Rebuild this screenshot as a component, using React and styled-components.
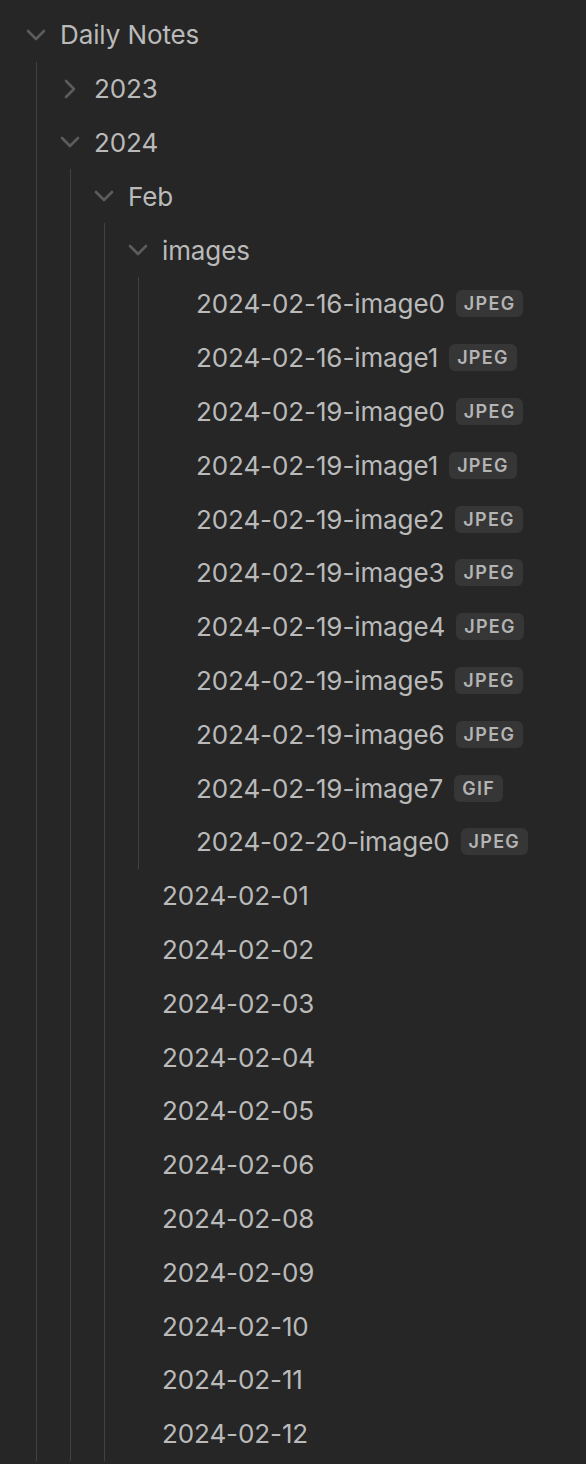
import React from 'react';
import styled, { createGlobalStyle } from 'styled-components';

const GlobalStyle = createGlobalStyle`
	html, body {
		margin: 0;
		padding: 0;
		background: #262626;
	}
	body {
		font-family: Inter, "Noto Sans", "Liberation Sans", sans-serif;
		-webkit-font-smoothing: antialiased;
	}
`;

const Explorer = styled.div`
	width: 586px;
	height: 1464px;
	padding: 8px 0 0 3px;
	box-sizing: border-box;
	background: #262626;
	overflow: hidden;
`;

const Row = styled.div`
	display: flex;
	align-items: center;
	height: 53.8px;
	padding-left: ${(p) => (p.$file ? '57px' : '21px')};
	color: #bababa;
	font-size: 26px;
	font-weight: 400;
	letter-spacing: -0.1px;
	white-space: nowrap;
`;

const Chevron = styled.svg`
	width: 24px;
	height: 24px;
	margin-right: 12px;
	flex: none;
	color: #5c5c5c;
	transform: ${(p) => (p.$open ? 'none' : 'rotate(-90deg)')};
`;

const Children = styled.div`
	margin-left: 33px;
	border-left: 1px solid #414141;
`;

const Tag = styled.span`
	display: inline-flex;
	align-items: center;
	height: 27px;
	margin-left: 11px;
	padding: 0 8px;
	border-radius: 6px;
	background: #363636;
	color: #b4b4b4;
	font-size: 18px;
	font-weight: 600;
	letter-spacing: 1.3px;
`;

const Arrow = ({ open }) => (
	<Chevron $open={open} viewBox="0 0 24 24" fill="none">
		<path
			d="M4 8 L12 16 L20 8"
			stroke="currentColor"
			strokeWidth="2.6"
			strokeLinecap="round"
			strokeLinejoin="round"
		/>
	</Chevron>
);

const Folder = ({ name, open, children }) => (
	<div>
		<Row>
			<Arrow open={open} />
			{name}
		</Row>
		{open && <Children>{children}</Children>}
	</div>
);

const File = ({ name, ext }) => (
	<Row $file>
		{name}
		{ext && <Tag>{ext}</Tag>}
	</Row>
);

const images = [
	['2024-02-16-image0', 'JPEG'],
	['2024-02-16-image1', 'JPEG'],
	['2024-02-19-image0', 'JPEG'],
	['2024-02-19-image1', 'JPEG'],
	['2024-02-19-image2', 'JPEG'],
	['2024-02-19-image3', 'JPEG'],
	['2024-02-19-image4', 'JPEG'],
	['2024-02-19-image5', 'JPEG'],
	['2024-02-19-image6', 'JPEG'],
	['2024-02-19-image7', 'GIF'],
	['2024-02-20-image0', 'JPEG'],
];

const notes = [
	'2024-02-01',
	'2024-02-02',
	'2024-02-03',
	'2024-02-04',
	'2024-02-05',
	'2024-02-06',
	'2024-02-08',
	'2024-02-09',
	'2024-02-10',
	'2024-02-11',
	'2024-02-12',
];

const App = () => {
	return (
		<>
			<GlobalStyle />
			<Explorer>
				<Folder name="Daily Notes" open>
					<Folder name="2023" />
					<Folder name="2024" open>
						<Folder name="Feb" open>
							<Folder name="images" open>
								{images.map(([name, ext]) => (
									<File key={name} name={name} ext={ext} />
								))}
							</Folder>
							{notes.map((n) => (
								<File key={n} name={n} />
							))}
						</Folder>
					</Folder>
				</Folder>
			</Explorer>
		</>
	);
};

export default App;
